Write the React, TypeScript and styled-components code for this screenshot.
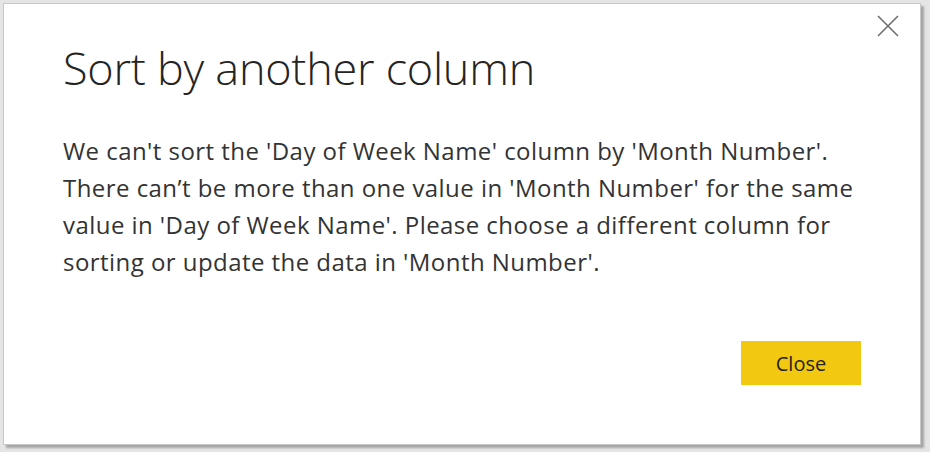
import styled, { createGlobalStyle } from "styled-components";

const GlobalStyle = createGlobalStyle`
  html, body {
    margin: 0;
    padding: 0;
    background: #e5e5e5;
    font-family: "Open Sans", "Noto Sans", "Liberation Sans", sans-serif;
  }
`;

function CloseIcon() {
  return (
    <svg width="24" height="24" viewBox="0 0 24 24" fill="none">
      <path d="M2 2 L22 22 M22 2 L2 22" stroke="#6e6e6e" strokeWidth="1.6" />
    </svg>
  );
}

function App() {
  return (
    <Page>
      <GlobalStyle />
      <Dialog>
        <DismissButton aria-label="Close dialog">
          <CloseIcon />
        </DismissButton>
        <Title>Sort by another column</Title>
        <Message>
          We can't sort the 'Day of Week Name' column by 'Month Number'.
          <br />
          There can’t be more than one value in 'Month Number' for the same
          <br />
          value in 'Day of Week Name'. Please choose a different column for
          <br />
          sorting or update the data in 'Month Number'.
        </Message>
        <Footer>
          <PrimaryButton>Close</PrimaryButton>
        </Footer>
      </Dialog>
    </Page>
  );
}

const Page = styled.div`
  width: 930px;
  height: 452px;
  padding: 3px 0 0 3px;
  box-sizing: border-box;
`;

const Dialog = styled.div`
  position: relative;
  width: 918px;
  height: 442px;
  box-sizing: border-box;
  background: #ffffff;
  border: 1px solid #c8c8c8;
  box-shadow: 3px 3px 2px rgba(0, 0, 0, 0.28);
  padding: 36px 60px 0 59px;
  display: flex;
  flex-direction: column;
`;

const DismissButton = styled.button`
  position: absolute;
  top: 10px;
  right: 20px;
  width: 24px;
  height: 24px;
  padding: 0;
  border: none;
  background: transparent;
  display: flex;
  cursor: pointer;
`;

const Title = styled.h1`
  margin: 0;
  font-size: 45px;
  font-weight: 300;
  line-height: 56px;
  color: #252423;
  letter-spacing: -0.25px;
`;

const Message = styled.p`
  margin: 36px 0 0;
  font-size: 24px;
  line-height: 37px;
  letter-spacing: 0.45px;
  color: #333333;
`;

const Footer = styled.div`
  display: flex;
  justify-content: flex-end;
  margin-top: 61px;
`;

const PrimaryButton = styled.button`
  width: 120px;
  height: 44px;
  margin-right: -1px;
  border: none;
  background: #f2c811;
  color: #252423;
  font-family: inherit;
  font-size: 20px;
  cursor: pointer;
`;

export default App;
